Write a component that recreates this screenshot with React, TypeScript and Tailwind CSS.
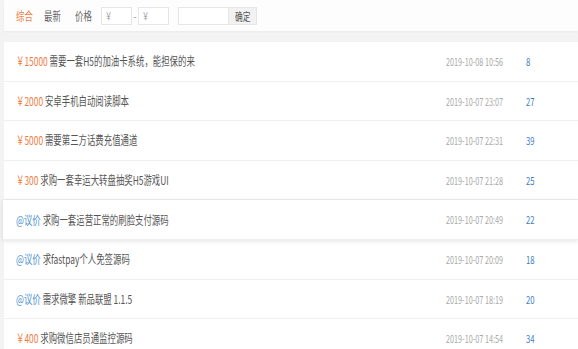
import React from 'react';

type Item = { price?: string; title: string; time: string; count: number };

const items: Item[] = [
  { price: '￥15000', title: '需要一套H5的加油卡系统，能担保的来', time: '2019-10-08 10:56', count: 8 },
  { price: '￥2000', title: '安卓手机自动阅读脚本', time: '2019-10-07 23:07', count: 27 },
  { price: '￥5000', title: '需要第三方话费充值通道', time: '2019-10-07 22:31', count: 39 },
  { price: '￥300', title: '求购一套幸运大转盘抽奖H5游戏UI', time: '2019-10-07 21:28', count: 25 },
  { title: '求购一套运营正常的刷脸支付源码', time: '2019-10-07 20:49', count: 22 },
  { title: '求fastpay个人免签源码', time: '2019-10-07 20:09', count: 18 },
  { title: '需求微擎 新品联盟 1.1.5', time: '2019-10-07 18:19', count: 20 },
  { price: '￥400', title: '求购微信店员通监控源码', time: '2019-10-07 14:54', count: 34 },
];

// the screenshot is horizontally condensed, so text is narrowed
const narrow = 'inline-block origin-left scale-x-[0.7] whitespace-nowrap';

export default function App() {
  return (
    <div
      className="w-[578px] h-[349px] overflow-hidden bg-[#f3f3f3] pl-[4px] text-[12px]"
      style={{ fontFamily: '"Noto Sans CJK SC", "Noto Sans", sans-serif' }}
    >
      {/* filter bar */}
      <div className="h-[31px] bg-[#fdfdfd] flex items-center pl-[12px] text-[#666] shadow-[0_1px_2px_rgba(0,0,0,0.04)]">
        <div className="w-[28px]">
          <span className={narrow + ' text-[#f07c3f]'}>综合</span>
        </div>
        <div className="w-[31px]">
          <span className={narrow}>最新</span>
        </div>
        <div className="w-[26px]">
          <span className={narrow}>价格</span>
        </div>
        <div className="w-[31px] h-[18px] border border-[#e6e6e6] bg-white text-[#999] text-[10px] leading-[16px] pl-[3px]">
          <span className={narrow}>￥</span>
        </div>
        <div className="w-[6px] text-center text-[#999] text-[10px]">-</div>
        <div className="w-[31px] h-[18px] border border-[#e6e6e6] bg-white text-[#999] text-[10px] leading-[16px] pl-[3px]">
          <span className={narrow}>￥</span>
        </div>
        <div className="ml-[9px] flex h-[18px]">
          <div className="w-[51px] border border-[#e6e6e6] bg-white" />
          <div className="w-[28px] bg-[#f2f2f2] border border-l-0 border-[#e6e6e6] text-[#555] text-[11px] leading-[16px] pl-[6px]">
            <span className={narrow}>确定</span>
          </div>
        </div>
      </div>

      {/* list */}
      <div className="mt-[11px] bg-white">
        {items.map((it, i) => (
          <div
            key={i}
            className={
              'h-[39.6px] flex items-center border-b border-[#efefef] ' +
              (i === 4 ? 'bg-white -ml-[1px] pl-[13px] shadow-[0_1px_5px_rgba(0,0,0,0.12)] relative' : 'pl-[12px]')
            }
          >
            <div className="flex-1 min-w-0 text-[#555]">
              <span className={narrow}>
                {it.price ? (
                  <span className="text-[#f07c3f]">{it.price}</span>
                ) : (
                  <span className="text-[#4a8fd0]">@议价</span>
                )}{' '}
                {it.title}
              </span>
            </div>
            <div className="w-[80px] text-[#aaa] text-[11px]">
              <span className={narrow + ' scale-x-[0.66]'}>{it.time}</span>
            </div>
            <div className="w-[52px] text-[#3f7fbf] text-[11px]">
              <span className={narrow}>{it.count}</span>
            </div>
          </div>
        ))}
      </div>
    </div>
  );
}
